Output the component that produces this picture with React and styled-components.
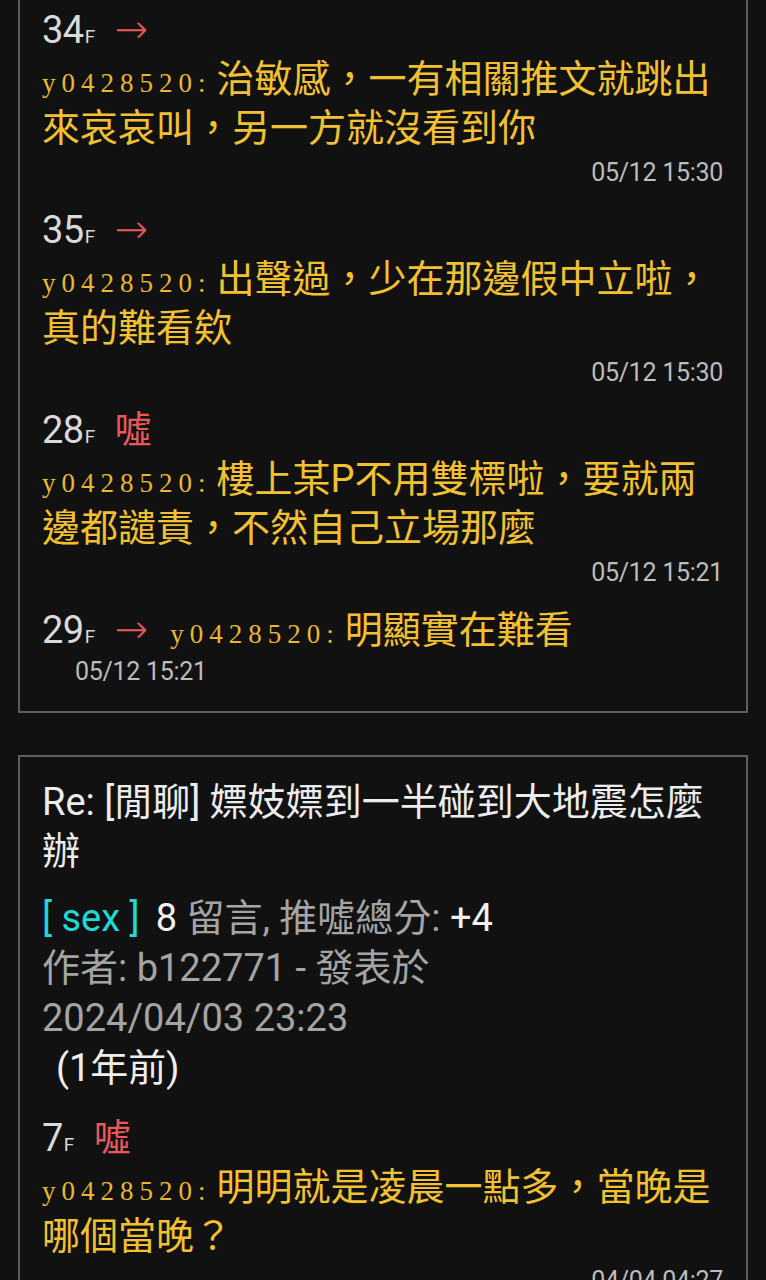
import styled, { createGlobalStyle } from "styled-components";

const GlobalStyle = createGlobalStyle`
  body {
    margin : 0;
    background-color : #111111;
    font-family : Roboto, "Noto Sans CJK TC", sans-serif;
  }
`;

const Page = styled.div`
  display : flex;
  flex-direction : column;
  gap : 42px;
  padding : 0 18px;
`;

const Card = styled.div`
  display : flex;
  flex-direction : column;
  border : 2px solid #5e5e5e;
  border-top-width : ${(p) => (p.$cut ? "0" : "2px")};
  padding : ${(p) => (p.$cut ? "5px 23px 22px 22px" : "21px 23px 0 22px")};
`;

const List = styled.div`
  display : flex;
  flex-direction : column;
  gap : 12px;
  margin-top : ${(p) => p.$top || 0}px;
`;

const Block = styled.div`
  display : flex;
  flex-direction : column;
`;

const Header = styled.div`
  display : flex;
  align-items : baseline;
  gap : 20px;
  height : 50px;
  line-height : 50px;
  white-space : nowrap;
`;

const Floor = styled.span`
  color : #dadada;
  font-size : 38px;
  letter-spacing : -0.5px;

  small {
    font-size : 19px;
    margin-left : 1px;
  }
`;

const Tag = styled.span`
  color : #e65a5c;
  font-size : ${(p) => (p.$boo ? "37px" : "40px")};
  font-family : ${(p) => (p.$boo ? '"Noto Sans CJK TC"' : '"DejaVu Sans"')}, sans-serif;
  font-weight : ${(p) => (p.$boo ? 400 : 200)};
  line-height : 20px;
`;

const Body = styled.div`
  color : #f2c033;
  font-size : 38px;
  line-height : 49px;
`;

const InlineBody = styled.span`
  color : #f2c033;
  font-size : 38px;
`;

const User = styled.span`
  font-family : "Liberation Serif", serif;
  font-size : 27px;
  line-height : 20px;
  letter-spacing : 6px;
  margin-right : 5px;
  margin-left : ${(p) => p.$gap || 0}px;
  color : #e8b734;
`;

const Time = styled.div`
  color : #bcbcbc;
  font-size : 25px;
  line-height : ${(p) => (p.$left ? "34px" : "40px")};
  text-align : ${(p) => (p.$left ? "left" : "right")};
  padding-left : ${(p) => (p.$left ? "33px" : "0")};
  letter-spacing : -0.3px;
`;

const Title = styled.div`
  color : #ececec;
  font-size : 38px;
  line-height : 49px;
`;

const Meta = styled.div`
  display : flex;
  flex-direction : column;
  margin-top : 17px;
  font-size : 38px;
  line-height : 50px;
  color : #a4a4a4;
`;

const Board = styled.span`
  color : #1fd8d8;
`;

const Strong = styled.span`
  color : #f2f2f2;
  margin-left : ${(p) => p.$gap || 0}px;
`;

const Ago = styled.div`
  color : #eeeeee;
  padding-left : 14px;
`;

const Comment = ({ floor, tag, user, text, time }) => (
  <Block>
    <Header>
      <Floor>
        {floor}
        <small>F</small>
      </Floor>
      <Tag $boo={tag === "噓"}>{tag}</Tag>
    </Header>
    <Body>
      <User>{user}:</User>
      {text}
    </Body>
    <Time>{time}</Time>
  </Block>
);

const ShortComment = ({ floor, tag, user, text, time }) => (
  <Block>
    <Header>
      <Floor>
        {floor}
        <small>F</small>
      </Floor>
      <Tag $boo={tag === "噓"}>{tag}</Tag>
      <span>
        <User $gap={2}>{user}:</User>
        <InlineBody>{text}</InlineBody>
      </span>
    </Header>
    <Time $left>{time}</Time>
  </Block>
);

const App = () => {
  return (
    <>
      <GlobalStyle />
      <Page>
        <Card $cut>
          <List>
            <Comment
              floor="34"
              tag="→"
              user="y0428520"
              text="治敏感，一有相關推文就跳出來哀哀叫，另一方就沒看到你"
              time="05/12 15:30"
            />
            <Comment
              floor="35"
              tag="→"
              user="y0428520"
              text="出聲過，少在那邊假中立啦，真的難看欸"
              time="05/12 15:30"
            />
            <Comment
              floor="28"
              tag="噓"
              user="y0428520"
              text="樓上某P不用雙標啦，要就兩邊都譴責，不然自己立場那麼"
              time="05/12 15:21"
            />
            <ShortComment
              floor="29"
              tag="→"
              user="y0428520"
              text="明顯實在難看"
              time="05/12 15:21"
            />
          </List>
        </Card>
        <Card>
          <Title>Re: [閒聊] 嫖妓嫖到一半碰到大地震怎麼辦</Title>
          <Meta>
            <div>
              <Board>[ sex ]</Board>
              <Strong $gap={16}>8</Strong> 留言, 推噓總分: <Strong>+4</Strong>
            </div>
            <div>作者: b122771 - 發表於</div>
            <div>2024/04/03 23:23</div>
            <Ago>(1年前)</Ago>
          </Meta>
          <List $top={20}>
            <Comment
              floor="7"
              tag="噓"
              user="y0428520"
              text="明明就是凌晨一點多，當晚是哪個當晚？"
              time="04/04 04:27"
            />
          </List>
        </Card>
      </Page>
    </>
  );
};

export default App;
